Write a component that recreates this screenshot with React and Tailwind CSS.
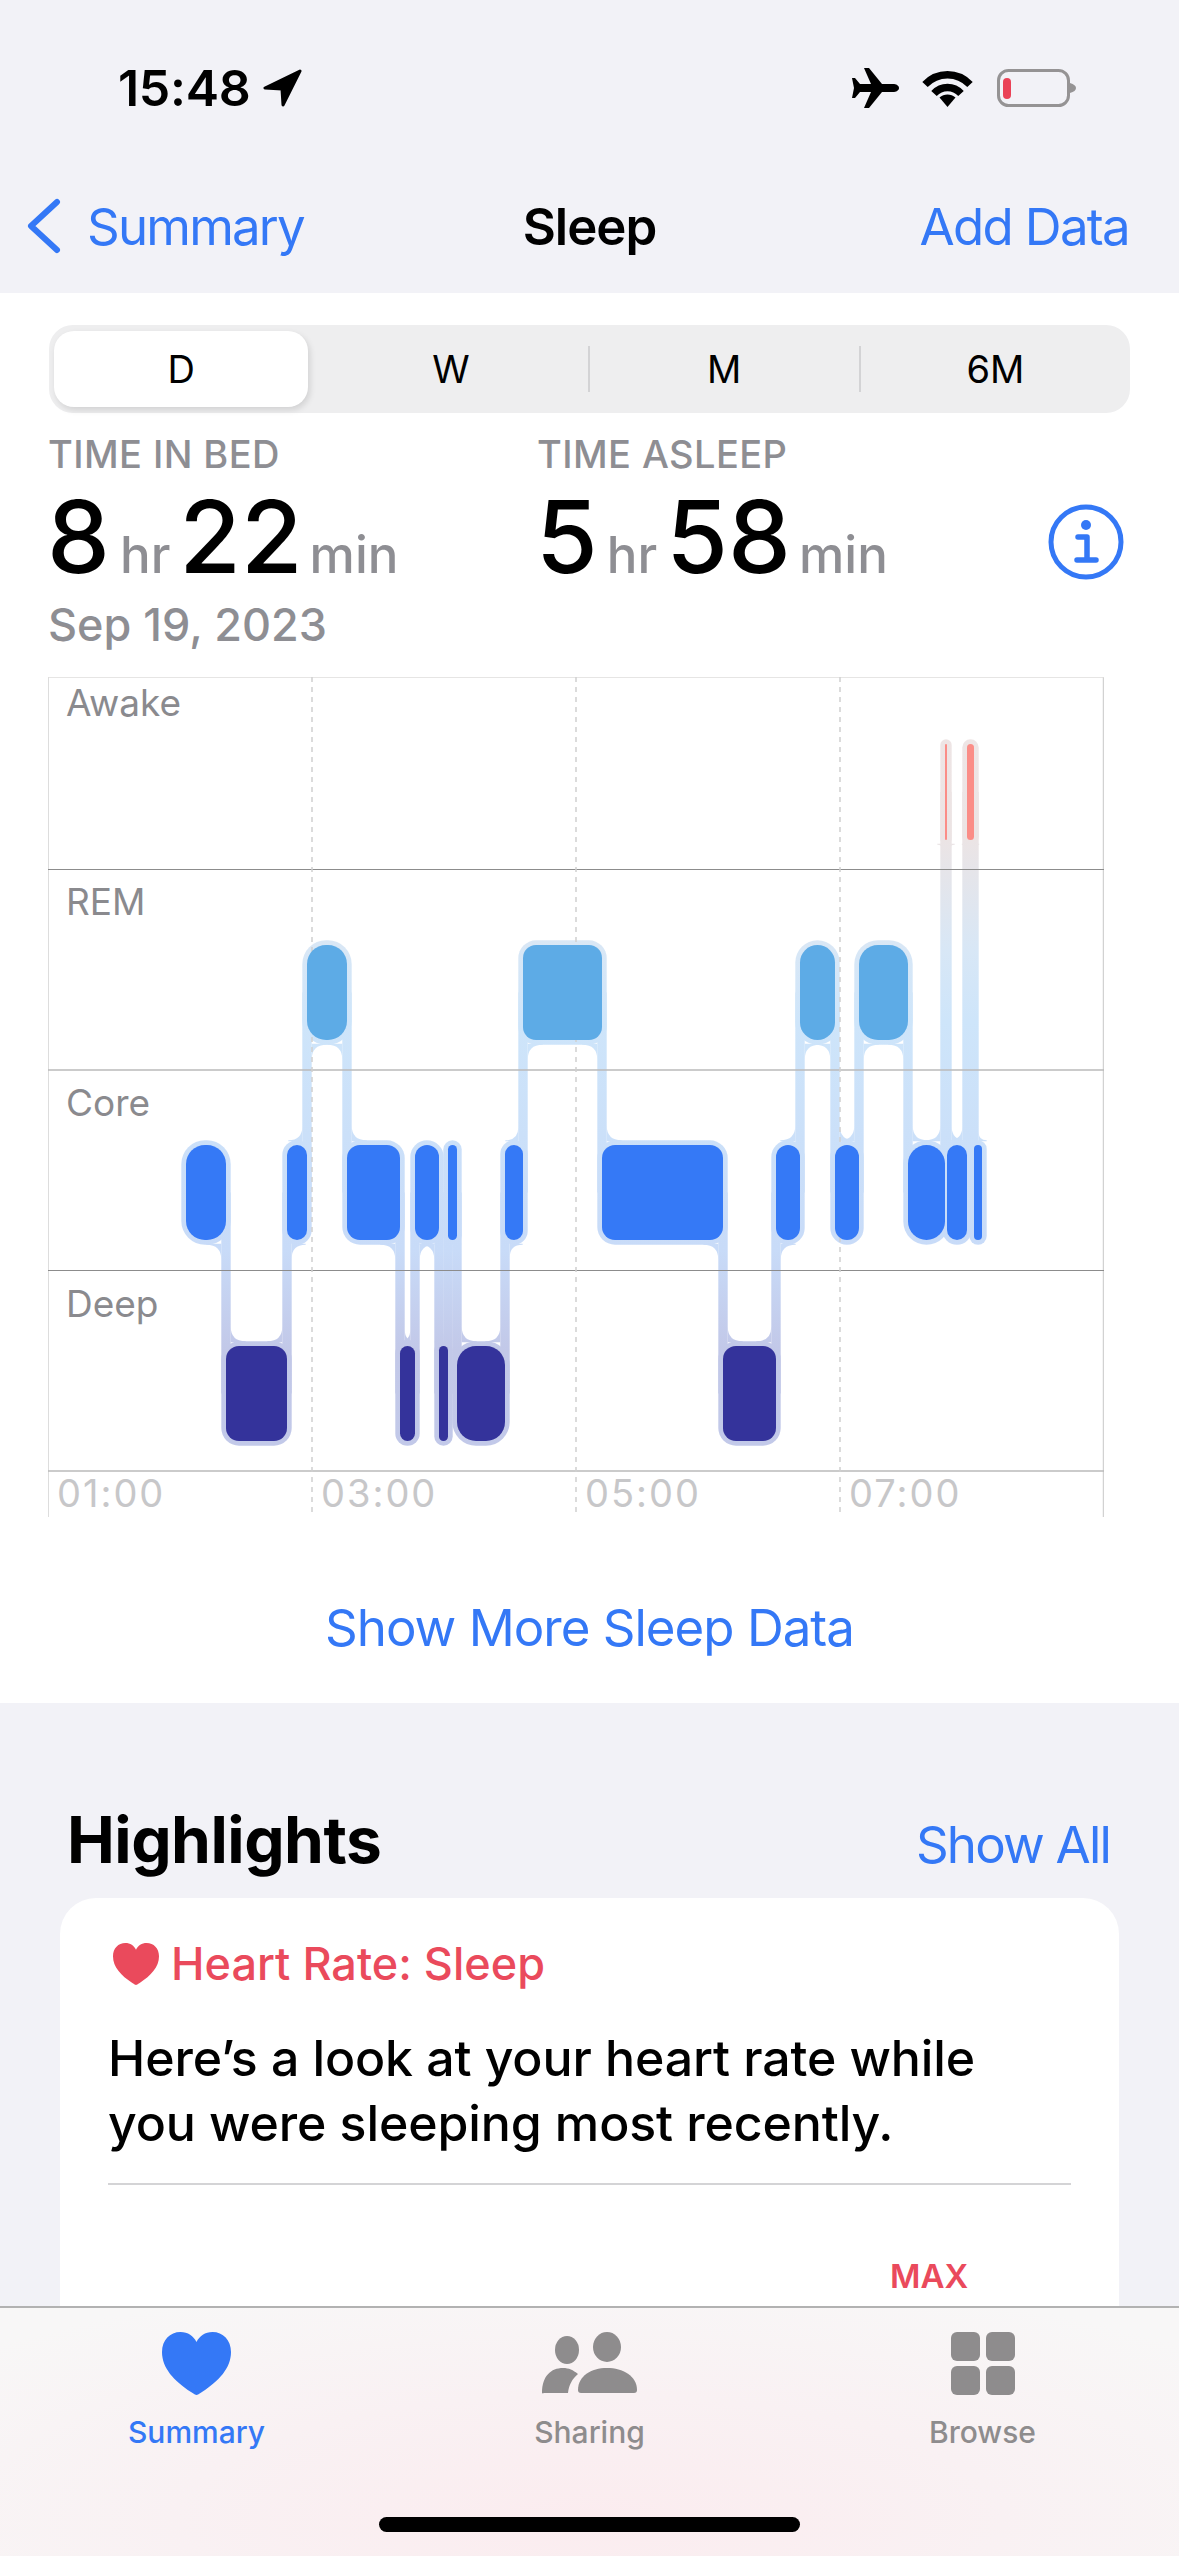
import React from 'react';

const REM = [945, 1040];
const CORE = [1145, 1240];
const DEEP = [1346, 1441];
const AWAKE = [744, 840];

// sleep timeline, each stage runs into the next one
const stages = [
    ['core', 186, 226], ['deep', 226, 287], ['core', 287, 307], ['rem', 307, 347],
    ['core', 347, 400], ['deep', 400, 415], ['core', 415, 439], ['deep', 439, 448],
    ['core', 448, 457], ['deep', 457, 505], ['core', 505, 523], ['rem', 523, 602],
    ['core', 602, 723], ['deep', 723, 776], ['core', 776, 800], ['rem', 800, 835],
    ['core', 835, 859], ['rem', 859, 908], ['core', 908, 945], ['awake', 945, 947],
    ['core', 947, 967], ['awake', 967, 974], ['core', 974, 982],
];

const rows = { rem: REM, core: CORE, deep: DEEP, awake: AWAKE };
const fills = { rem: '#5dabe6', core: '#3579f6', deep: '#34339b', awake: '#fb8d87' };
const HALO = 4.7;

const radius = (w) => (w >= 50 ? 13 : Math.min(w / 2, 19));

const SleepChart = () => {
    const strips = [];
    const fillets = [];
    stages.slice(1).forEach((s, i) => {
        const prev = stages[i];
        const b = s[1];
        const a = rows[prev[0]];
        const c = rows[s[0]];
        const leftIsUpper = a[0] < c[0];
        const upper = leftIsUpper ? a : c;
        const lower = leftIsUpper ? c : a;
        // run the strip from the middle of one bar to the middle of the other
        const top = (upper[0] + upper[1]) / 2;
        const bottom = (lower[0] + lower[1]) / 2;
        strips.push({ x: b - HALO, y: top, h: bottom - top });

        const upperW = leftIsUpper ? prev[2] - prev[1] : s[2] - s[1];
        const lowerW = leftIsUpper ? s[2] - s[1] : prev[2] - prev[1];
        const ru = Math.min(15, upperW / 2 + 4);
        const rl = Math.min(15, lowerW / 2 + 4);
        const dir = leftIsUpper ? -1 : 1;
        const ux = b + dir * HALO;
        const uy = upper[1] + HALO;
        const lx = b - dir * HALO;
        const ly = lower[0] - HALO;
        fillets.push(`M${ux} ${uy - 1}H${ux + dir * ru}V${uy}Q${ux} ${uy} ${ux} ${uy + ru}Z`);
        fillets.push(`M${lx} ${ly + 1}H${lx - dir * rl}V${ly}Q${lx} ${ly} ${lx} ${ly - rl}Z`);
    });

    return (
        <svg className="absolute inset-0" width="1056" height="840" viewBox="48 677 1056 840">
            <defs>
                <linearGradient id="halo" gradientUnits="userSpaceOnUse" x1="0" y1="735" x2="0" y2="1450">
                    <stop offset="0" stopColor="#eee5e5" />
                    <stop offset="0.14" stopColor="#ece4e4" />
                    <stop offset="0.3" stopColor="#d8e7f6" />
                    <stop offset="0.4" stopColor="#cee5fa" />
                    <stop offset="0.72" stopColor="#c8dbf8" />
                    <stop offset="0.86" stopColor="#c2c8e8" />
                    <stop offset="1" stopColor="#c2c9e9" />
                </linearGradient>
            </defs>

            {/* halos and connectors */}
            <g fill="url(#halo)">
                {stages.map(([kind, x1, x2]) => {
                    const [y1, y2] = rows[kind];
                    return (
                        <rect
                            key={`h${x1}`}
                            x={x1 - HALO}
                            y={y1 - HALO}
                            width={x2 - x1 + HALO * 2}
                            height={y2 - y1 + HALO * 2}
                            rx={radius(x2 - x1) + HALO}
                        />
                    );
                })}
                {strips.map((s) => (
                    <rect key={`s${s.x}`} x={s.x} y={s.y} width={HALO * 2} height={s.h} />
                ))}
                {fillets.map((d, i) => (
                    <path key={i} d={d} />
                ))}
            </g>

            {/* grid */}
            <path d="M48 677V1517M1103.500 677V1517" stroke="#d2d2d2" strokeWidth="1.500" />
            <path d="M48 677H1104" stroke="#dedcdb" strokeWidth="1.500" />
            <path d="M48 869.500H1104M48 1270.500H1104" stroke="#8c8c8c" strokeWidth="1" />
            <path d="M48 1070H1104M48 1471H1104" stroke="#bbbbbb" strokeWidth="1.500" />
            <path d="M312 677V1517M576 677V1517M840 677V1517" stroke="#cfcfcf" strokeWidth="1.500" strokeDasharray="5 5" />

            {/* stage bars */}
            {stages.map(([kind, x1, x2]) => {
                const [y1, y2] = rows[kind];
                return (
                    <rect
                        key={`b${x1}`}
                        x={x1}
                        y={y1}
                        width={x2 - x1}
                        height={y2 - y1}
                        rx={radius(x2 - x1)}
                        fill={fills[kind]}
                    />
                );
            })}
        </svg>
    );
};

const Heart = ({ className }) => (
    <svg className={className} viewBox="0 0 69 63" fill="currentColor">
        <path d="M34.500 63C33.500 63 32 62 29 60C12 49 0 36 0 20C0 8 8 0 18.500 0C26 0 31.500 4 34.500 10C37.500 4 43 0 50.500 0C61 0 69 8 69 20C69 36 57 49 40 60C37 62 35.500 63 34.500 63Z" />
    </svg>
);

const App = () => {
    return (
        <div className="h-[2556px] w-[1179px] overflow-hidden flex flex-col bg-[#f2f2f7] font-['Inter',sans-serif] text-black">
            <div className="flex-1 min-h-0 overflow-hidden">
                {/* Status bar */}
                <div className="h-[176px] flex items-center justify-between pl-[118px] pr-[100px]">
                    <div className="flex items-center gap-[13px]">
                        <span className="text-[50px] font-semibold leading-none tracking-[-0.3px]">15:48</span>
                        <svg width="39" height="38" viewBox="0 0 39 38" fill="currentColor">
                            <path d="M37 2L2 19L19 20L20 36Z" stroke="currentColor" strokeWidth="3" strokeLinejoin="round" />
                        </svg>
                    </div>
                    <div className="flex items-center">
                        <svg width="48" height="40" viewBox="0 0 48 40" fill="currentColor">
                            <path d="M47 20C47 17.500 44 16 41 16H30L17 0H12L19 16H8L3 10H0L2 20L0 30H3L8 24H19L12 40H17L30 24H41C44 24 47 22.500 47 20Z" />
                        </svg>
                        <svg className="ml-[22px]" width="51" height="37" viewBox="0 0 51 37" fill="none" stroke="currentColor">
                            <path d="M3 14.500C15.500 1.500 35.500 1.500 48 14.500" strokeWidth="7.500" />
                            <path d="M12 23.500C19.500 15.500 31.500 15.500 39 23.500" strokeWidth="7.500" />
                            <path d="M17.500 27.500C22 23.500 29 23.500 33.500 27.500L25.500 37Z" fill="currentColor" stroke="none" />
                        </svg>
                        <svg className="ml-[24px]" width="82" height="38" viewBox="0 0 82 38">
                            <rect x="1.500" y="1.500" width="70" height="35" rx="10" fill="none" stroke="#959394" strokeWidth="3" />
                            <rect x="6" y="9" width="8" height="21" rx="4" fill="#ea4257" />
                            <path d="M73 14C77 15 79 17 79 19C79 21 77 23 73 24Z" fill="#959394" />
                        </svg>
                    </div>
                </div>

                {/* Nav bar */}
                <div className="h-[117px] pb-[17px] grid grid-cols-3 items-center text-[51px] leading-none text-[#3478f6]">
                    <div className="flex items-center pl-[27px] gap-[26px]">
                        <svg width="34" height="56" viewBox="0 0 34 56" fill="none" stroke="currentColor" strokeWidth="6" strokeLinecap="round" strokeLinejoin="round">
                            <path d="M30 4L4 28L30 52" />
                        </svg>
                        <span className="tracking-[-1.800px]">Summary</span>
                    </div>
                    <div className="text-center font-semibold text-black tracking-[-1px]">Sleep</div>
                    <div className="text-right pr-[50px] tracking-[-1.700px]">Add Data</div>
                </div>

                {/* Sleep section */}
                <div className="h-[1410px] bg-white pt-[32px] overflow-hidden">
                    <div className="mx-[49px] h-[88px] rounded-[24px] bg-[#eeeeef] flex items-center pl-[5px] text-[38px]">
                        <div className="w-[255px] h-[76px] rounded-[20px] bg-white shadow-[2px_3px_6px_rgba(0,0,0,0.12)] flex items-center justify-center">D</div>
                        <div className="w-[286px] text-center">W</div>
                        <div className="w-[2px] h-[46px] bg-[#d3d3d5] -ml-[6px]" />
                        <div className="w-[270px] text-center">M</div>
                        <div className="w-[2px] h-[46px] bg-[#d3d3d5]" />
                        <div className="w-[270px] text-center">6M</div>
                    </div>

                    <div className="mt-[19px] pl-[48px] pr-[55px] flex items-start">
                        <div className="w-[489px]">
                            <div className="text-[38px] leading-[44px] font-medium tracking-[0.4px] text-[#8e8e93]">TIME IN BED</div>
                            <div className="mt-[11px] -ml-[1px] flex items-baseline leading-none">
                                <span className="text-[100px] font-medium">8</span>
                                <span className="ml-[10px] text-[51px] font-medium text-[#8e8e93]">hr</span>
                                <span className="ml-[9px] text-[100px] font-medium">22</span>
                                <span className="ml-[7px] text-[51px] font-medium text-[#8e8e93]">min</span>
                            </div>
                        </div>
                        <div className="flex-1">
                            <div className="text-[38px] leading-[44px] font-medium tracking-[0.4px] text-[#8e8e93]">TIME ASLEEP</div>
                            <div className="mt-[11px] -ml-[1px] flex items-baseline leading-none">
                                <span className="text-[100px] font-medium">5</span>
                                <span className="ml-[9px] text-[51px] font-medium text-[#8e8e93]">hr</span>
                                <span className="ml-[9px] text-[100px] font-medium">58</span>
                                <span className="ml-[8px] text-[51px] font-medium text-[#8e8e93]">min</span>
                            </div>
                        </div>
                        <svg className="mt-[72px] text-[#3478f6]" width="76" height="76" viewBox="0 0 76 76" fill="none" stroke="currentColor">
                            <circle cx="38" cy="38" r="35" strokeWidth="5" />
                            <circle cx="38" cy="21" r="5" fill="currentColor" stroke="none" />
                            <path d="M30 33H39V55M29 56H48" strokeWidth="5.500" strokeLinecap="round" strokeLinejoin="round" />
                        </svg>
                    </div>

                    <div className="mt-[12px] pl-[48px] text-[45px] leading-[52px] font-medium text-[#8e8e93]">Sep 19, 2023</div>

                    {/* Chart */}
                    <div className="relative mt-[26px] ml-[48px] w-[1056px] h-[840px] text-[37px] text-[#8a8a8e]">
                        <SleepChart />
                        <div className="relative h-[193px] pl-[18px] pt-[4px] leading-[44px]">Awake</div>
                        <div className="relative h-[200px] pl-[18px] pt-[10px] leading-[44px]">REM</div>
                        <div className="relative h-[201px] pl-[18px] pt-[11px] leading-[44px]">Core</div>
                        <div className="relative h-[200px] pl-[18px] pt-[11px] leading-[44px]">Deep</div>
                        <div className="relative grid grid-cols-4 text-[38px] leading-[44px] text-[#c7c7c9] tracking-[2px]">
                            <div className="pl-[9px]">01:00</div>
                            <div className="pl-[9px]">03:00</div>
                            <div className="pl-[9px]">05:00</div>
                            <div className="pl-[9px]">07:00</div>
                        </div>
                    </div>

                    <div className="mt-[81px] text-center text-[51px] leading-[60px] tracking-[-1px] text-[#3478f6]">Show More Sleep Data</div>
                </div>

                {/* Highlights */}
                <div className="mt-[98px] pl-[67px] pr-[69px] flex items-baseline justify-between">
                    <div className="text-[64px] leading-[78px] font-bold tracking-[-0.5px]">Highlights</div>
                    <div className="text-[51px] leading-[60px] tracking-[-1.800px] text-[#3478f6]">Show All</div>
                </div>
                <div className="mt-[19px] mx-[60px] h-[500px] rounded-t-[36px] bg-white px-[48px] pt-[40px]">
                    <div className="flex items-center gap-[12px] text-[#ea4a5c]">
                        <Heart className="ml-[5px] w-[46px] h-[42px]" />
                        <span className="text-[45px] leading-[52px] font-medium">Heart Rate: Sleep</span>
                    </div>
                    <div className="mt-[36px] text-[50px] leading-[65px] font-medium tracking-[-0.1px]">Here’s a look at your heart rate while<br />you were sleeping most recently.</div>
                    <div className="mt-[27px] h-[2px] bg-[#d4d4d6]" />
                    <div className="mt-[71px] pl-[782px] text-[33px] leading-[40px] font-semibold text-[#ea4a5c]">MAX</div>
                </div>
            </div>

            {/* Tab bar */}
            <div className="h-[250px] shrink-0 border-t-2 border-[#b2b2b2] bg-[radial-gradient(ellipse_70%_100%_at_50%_85%,#fbecef_0%,#f9f1f3_50%,#f8f7f7_100%)] flex flex-col">
                <div className="grid grid-cols-3 pt-[24px] text-[30px] leading-[36px] font-medium text-[#8e8c8d]">
                    <div className="flex flex-col items-center text-[#3478f6]">
                        <Heart className="w-[69px] h-[63px]" />
                        <span className="mt-[19px]">Summary</span>
                    </div>
                    <div className="flex flex-col items-center">
                        <svg width="96" height="63" viewBox="0 0 96 63" fill="currentColor">
                            <ellipse cx="25" cy="18" rx="12" ry="14" />
                            <ellipse cx="65" cy="15" rx="14" ry="15" />
                            <path d="M0 61C0 44 9 36 21 36C27 36 31 38 36 42C30 47 27 53 26 61H3C1 61 0 62 0 61Z" />
                            <path d="M36 58C36 44 49 36 65 36C81 36 95 44 95 58C95 60 94 61 92 61H39C37 61 36 60 36 58Z" />
                        </svg>
                        <span className="mt-[19px]">Sharing</span>
                    </div>
                    <div className="flex flex-col items-center">
                        <svg width="64" height="63" viewBox="0 0 64 63" fill="currentColor">
                            <rect x="0" y="0" width="29" height="29" rx="6" />
                            <rect x="35" y="0" width="29" height="29" rx="6" />
                            <rect x="0" y="34" width="29" height="29" rx="6" />
                            <rect x="35" y="34" width="29" height="29" rx="6" />
                        </svg>
                        <span className="mt-[19px]">Browse</span>
                    </div>
                </div>
                <div className="mt-auto mb-[24px] mx-auto w-[421px] h-[15px] rounded-full bg-black" />
            </div>
        </div>
    );
};

export default App;
